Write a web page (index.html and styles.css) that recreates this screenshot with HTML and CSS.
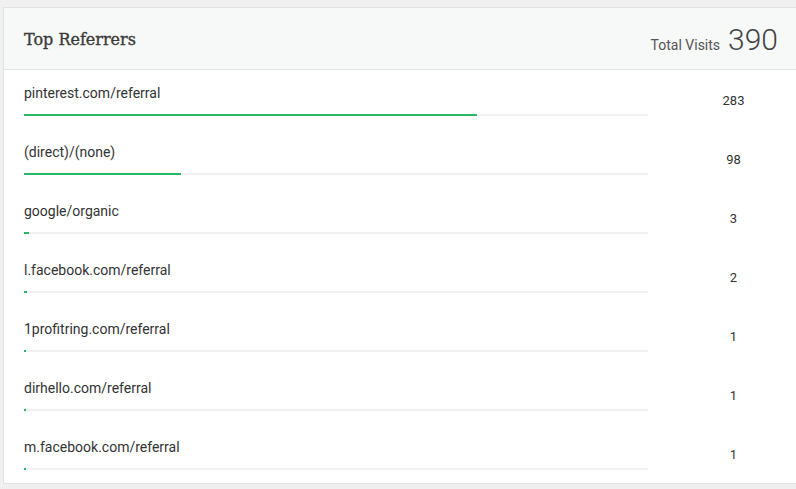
FILE: index.html
```html
<!DOCTYPE html>
<html>
<head>
<meta charset="utf-8">
<link rel="stylesheet" href="styles.css">
</head>
<body>
<div class="card">
  <div class="card-header">
    <h2 class="title">Top Referrers</h2>
    <div class="total"><span class="total-label">Total Visits</span><span class="total-value">390</span></div>
  </div>
  <div class="rows">
    <div class="row">
      <div class="info"><div class="label">pinterest.com/referral</div><div class="track"><div class="fill" style="width:72.564%"></div></div></div>
      <div class="count">283</div>
    </div>
    <div class="row">
      <div class="info"><div class="label">(direct)/(none)</div><div class="track"><div class="fill" style="width:25.128%"></div></div></div>
      <div class="count">98</div>
    </div>
    <div class="row">
      <div class="info"><div class="label">google/organic</div><div class="track"><div class="fill" style="width:0.769%"></div></div></div>
      <div class="count">3</div>
    </div>
    <div class="row">
      <div class="info"><div class="label">l.facebook.com/referral</div><div class="track"><div class="fill" style="width:0.513%"></div></div></div>
      <div class="count">2</div>
    </div>
    <div class="row">
      <div class="info"><div class="label">1profitring.com/referral</div><div class="track"><div class="fill" style="width:0.256%"></div></div></div>
      <div class="count">1</div>
    </div>
    <div class="row">
      <div class="info"><div class="label">dirhello.com/referral</div><div class="track"><div class="fill" style="width:0.256%"></div></div></div>
      <div class="count">1</div>
    </div>
    <div class="row">
      <div class="info"><div class="label">m.facebook.com/referral</div><div class="track"><div class="fill" style="width:0.256%"></div></div></div>
      <div class="count">1</div>
    </div>
  </div>
</div>
</body>
</html>
```

FILE: styles.css
```css
html {
  overflow: hidden;
}
body {
  margin: 0;
  background: #f0f0f0;
  font-family: Roboto, "Liberation Sans", sans-serif;
  color: #333;
}
.card {
  box-sizing: border-box;
  margin: 7px 0 0 3px;
  width: calc(100vw - 2px);
  background: #fff;
  border: 1px solid #e2e2e2;
}
.card-header {
  display: flex;
  align-items: center;
  justify-content: space-between;
  height: 61px;
  padding: 0 18px 0 20px;
  background: #f7f8f8;
  border-bottom: 1px solid #e3e3e3;
}
.title {
  margin: 0;
  font-family: "DejaVu Serif", "Liberation Serif", serif;
  font-size: 16px;
  font-weight: normal;
  color: #3a3a3a;
  -webkit-text-stroke: 0.35px #3a3a3a;
  padding-top: 2px;
}
.total {
  display: flex;
  align-items: baseline;
  gap: 8px;
  padding-top: 2px;
}
.total-label {
  font-size: 14px;
  font-weight: 400;
  color: #555;
}
.total-value {
  font-size: 30px;
  font-weight: 300;
  color: #444;
}
.row {
  display: grid;
  grid-template-columns: 624px 1fr;
  align-items: center;
  height: 59px;
  box-sizing: border-box;
  padding: 15px 0 13px 20px;
}
.label {
  font-size: 14px;
  line-height: 17px;
  color: #333;
}
.track {
  margin-top: 12px;
  height: 2px;
  background: #f1f1f1;
}
.fill {
  height: 2px;
  min-width: 1px;
  background: #27b766;
}
.count {
  padding-left: 23px;
  text-align: center;
  font-size: 13px;
  color: #333;
}
```
